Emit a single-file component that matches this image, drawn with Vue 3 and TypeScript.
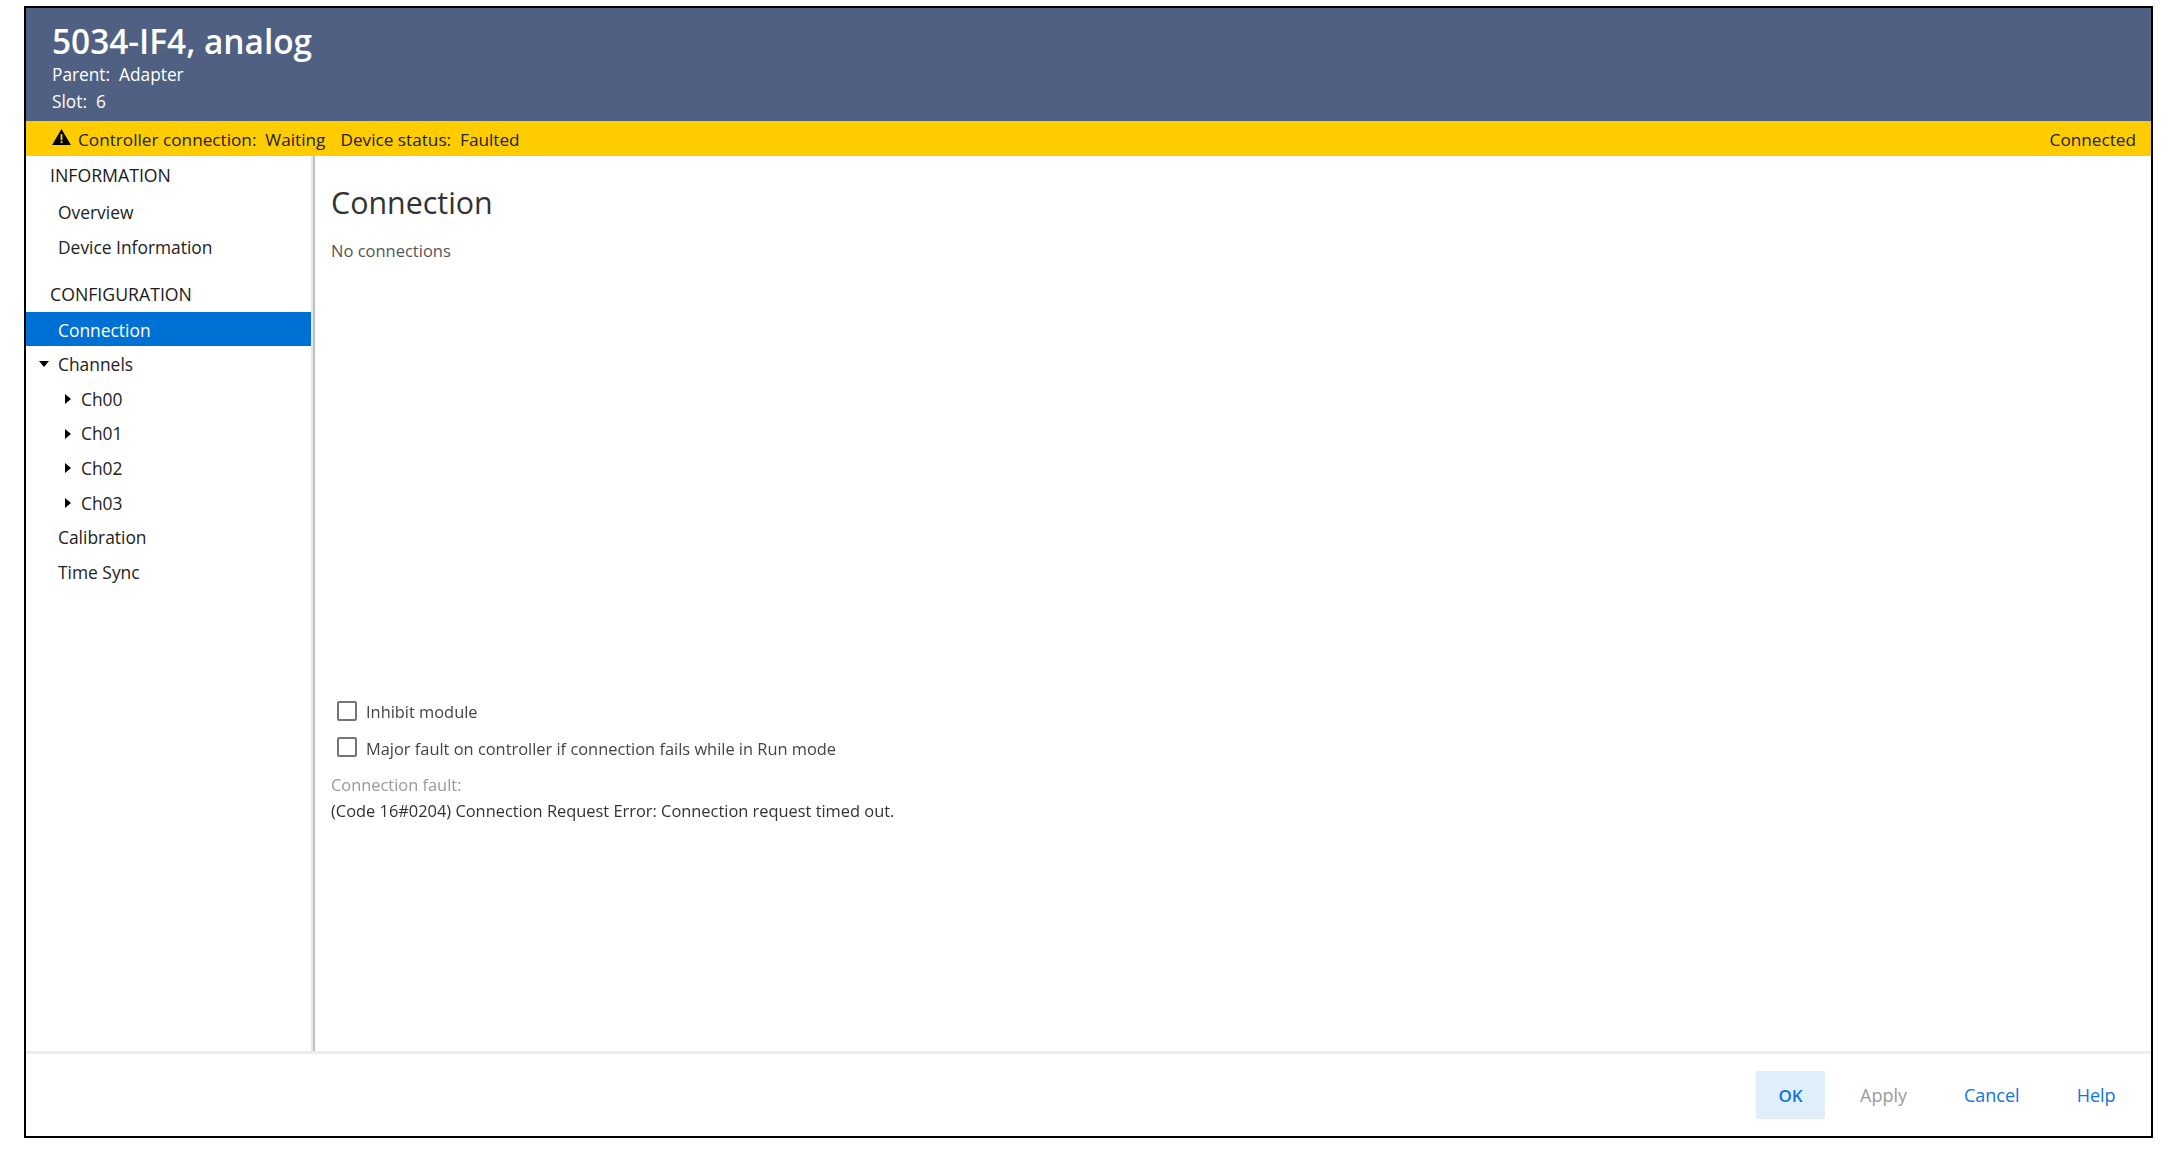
<script setup lang="ts">
const infoItems: string[] = ['Overview', 'Device Information']
const channels: string[] = ['Ch00', 'Ch01', 'Ch02', 'Ch03']
</script>

<template>
  <div class="page">
    <div class="frame">
      <header class="head">
        <h1 class="title">5034-IF4, analog</h1>
        <div class="meta">Parent:&nbsp; Adapter</div>
        <div class="meta">Slot:&nbsp; 6</div>
      </header>
      <div class="status">
        <svg class="warn" width="19" height="16" viewBox="0 0 20 17">
          <path d="M10 0 L20 17 L0 17 Z" fill="#000" />
          <rect x="9" y="5.5" width="2" height="6.5" fill="#ffcc00" />
          <rect x="9" y="13" width="2" height="2" fill="#ffcc00" />
        </svg>
        <span>Controller connection:&nbsp; Waiting</span>
        <span class="device">Device status:&nbsp; Faulted</span>
        <span class="conn">Connected</span>
      </div>
      <div class="body">
        <nav class="side">
          <div class="group">INFORMATION</div>
          <div v-for="i in infoItems" :key="i" class="item">{{ i }}</div>
          <div class="group second">CONFIGURATION</div>
          <div class="item active">Connection</div>
          <div class="item">
            <svg class="caret down" width="10" height="6" viewBox="0 0 10 6"><path d="M0 0H10L5 6Z" fill="#000" /></svg>
            Channels
          </div>
          <div v-for="c in channels" :key="c" class="item sub">
            <svg class="caret right" width="6" height="10" viewBox="0 0 6 10"><path d="M0 0V10L6 5Z" fill="#000" /></svg>
            {{ c }}
          </div>
          <div class="item">Calibration</div>
          <div class="item">Time Sync</div>
        </nav>
        <main class="main">
          <h2 class="heading">Connection</h2>
          <p class="none">No connections</p>
          <div class="lower">
            <label class="check"><span class="box"></span><span class="check-text">Inhibit module</span></label>
            <label class="check"><span class="box"></span><span class="check-text">Major fault on controller if connection fails while in Run mode</span></label>
            <div class="fault-label">Connection fault:</div>
            <div class="fault">(Code 16#0204) Connection Request Error: Connection request timed out.</div>
          </div>
        </main>
      </div>
      <footer class="foot">
        <button class="btn primary">OK</button>
        <button class="btn apply">Apply</button>
        <button class="btn cancel">Cancel</button>
        <button class="btn help">Help</button>
      </footer>
    </div>
  </div>
</template>

<style>
html, body { margin: 0; background: #fff; }
</style>

<style scoped>
.page {
  width: 2166px;
  height: 1150px;
  padding: 6px 13px 12px 24px;
  box-sizing: border-box;
  font-family: "Open Sans", "Noto Sans", sans-serif;
  font-size: 16px;
  color: #1a1a1a;
}
.frame {
  height: 100%;
  border: 2px solid #000;
  box-sizing: border-box;
  display: flex;
  flex-direction: column;
  background: #fff;
}
.head {
  height: 113px;
  flex: none;
  background: #4f6082;
  color: #fff;
  padding: 0 0 0 26px;
  box-sizing: border-box;
}
.title {
  margin: 0;
  padding-top: 11px;
  font-size: 33.4px;
  line-height: 44px;
  font-weight: 600;
}
.meta { font-size: 17.3px; line-height: 26.5px; margin-top: 0; position: relative; top: -1px; }
.status {
  height: 35px;
  flex: none;
  background: #ffcc00;
  display: flex;
  align-items: center;
  padding: 2px 15px 0 26px;
  box-sizing: border-box;
  color: #222;
  font-size: 17.2px;
}
.warn { margin-right: 7px; margin-top: -6px; }
.device { margin-left: 15px; }
.conn { margin-left: auto; }
.body { flex: 1; display: flex; min-height: 0; }
.side {
  width: 285px;
  flex: none;
  padding-top: 2px;
  box-sizing: content-box;
  border-right: 2px solid #e6e7ea;
}
.group { height: 34px; line-height: 34px; padding-left: 24px; font-size: 17.7px; }
.group + .item { margin-top: 3px; }
.group.second { margin-top: 13px; margin-bottom: 0; }
.group.second + .item { margin-top: 1px; }
.item {
  position: relative;
  height: 34.6px;
  line-height: 34.6px;
  padding-left: 32px;
  font-size: 17.4px;
  color: #222;
}
.item.sub { padding-left: 55px; }
.active { background: #0071d4; color: #fff; height: 34px; line-height: 36px; margin-bottom: 1px; }
.caret { position: absolute; top: 50%; }
.down { left: 13px; margin-top: -3px; }
.right { left: 39px; margin-top: -5px; }
.main {
  flex: 1;
  border-left: 2px solid #bdc1c6;
  padding-left: 16px;
  display: flex;
  flex-direction: column;
}
.heading { margin: 0; padding-top: 25px; font-size: 30.4px; line-height: 44px; font-weight: 400; color: #333; }
.none { margin: 0; padding-top: 14px; font-size: 16.5px; line-height: 24px; color: #555; }
.lower { margin-top: 430px; filter: blur(0.3px); }
.check {
  display: flex;
  align-items: center;
  height: 36.5px;
  padding-left: 6px;
  font-size: 16.4px;
  color: #444;
}
.check-text { margin-top: 1px; }
.box {
  width: 16px;
  height: 16px;
  border: 2px solid #757575;
  border-radius: 2px;
  margin: -1px 9px 0 0;
  flex: none;
}
.fault-label { margin-top: 6px; font-size: 16.4px; line-height: 26px; color: #999; }
.fault { font-size: 16.4px; line-height: 26px; color: #333; }
.foot {
  height: 85px;
  flex: none;
  border-top: 3px solid #ecedf1;
  box-sizing: border-box;
  display: flex;
  align-items: flex-start;
  padding-top: 17px;
  position: relative;
}
.btn {
  border: 0;
  background: transparent;
  font: inherit;
  font-size: 18px;
  color: #0f75dc;
  height: 48px;
  padding: 0;
}
.primary { margin-left: 1730px; width: 69px; background: #e0eefa; border-radius: 2px; font-size: 17px; font-weight: 600; }
.apply { margin-left: 35px; color: #9a9a9a; }
.cancel { margin-left: 57px; }
.help { margin-left: 57px; }
</style>
